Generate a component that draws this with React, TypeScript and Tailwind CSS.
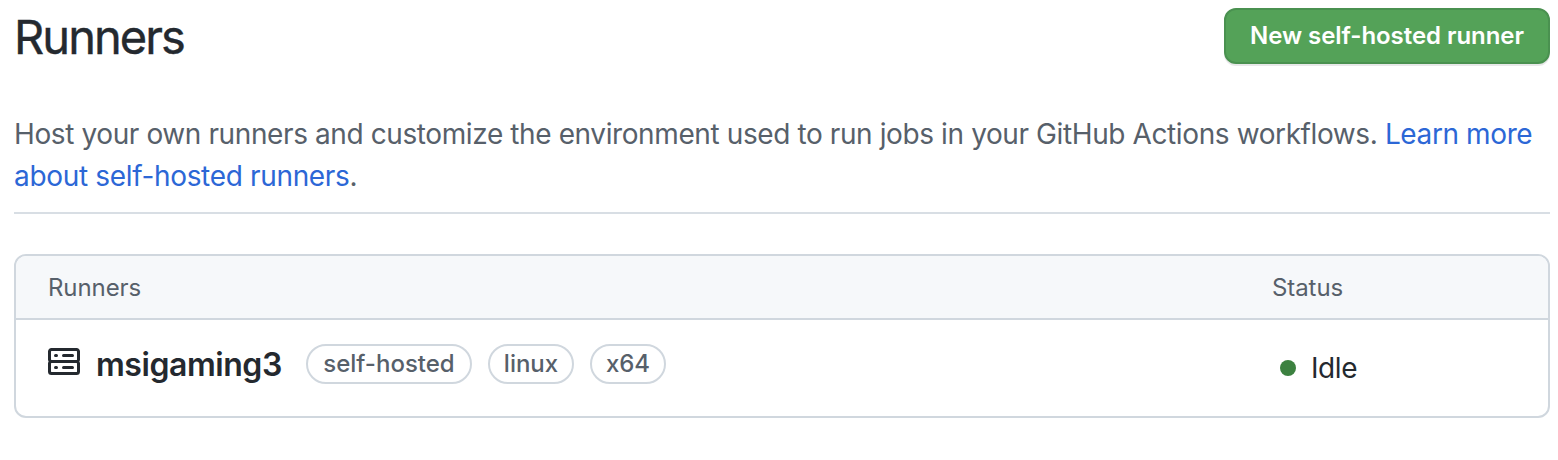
import React from "react";

const labels = [
  { name: "self-hosted", width: "w-[166px]" },
  { name: "linux", width: "w-[86px]" },
  { name: "x64", width: "w-[76px]" },
];

function ServerIcon() {
  return (
    <svg width="32" height="32" viewBox="0 0 16 16" fill="#24292f" className="shrink-0">
      <path d="M1.75 1h12.5c.966 0 1.75.784 1.75 1.75v4c0 .372-.116.717-.314 1 .198.283.314.628.314 1v4a1.75 1.75 0 0 1-1.75 1.75H1.75A1.75 1.75 0 0 1 0 12.75v-4c0-.358.109-.707.314-1a1.739 1.739 0 0 1-.314-1v-4C0 1.784.784 1 1.75 1ZM1.5 2.75v4c0 .138.112.25.25.25h12.5a.25.25 0 0 0 .25-.25v-4a.25.25 0 0 0-.25-.25H1.75a.25.25 0 0 0-.25.25Zm.25 5.75a.25.25 0 0 0-.25.25v4c0 .138.112.25.25.25h12.5a.25.25 0 0 0 .25-.25v-4a.25.25 0 0 0-.25-.25ZM7 4.75A.75.75 0 0 1 7.75 4h4.5a.75.75 0 0 1 0 1.5h-4.5A.75.75 0 0 1 7 4.75ZM7.75 10h4.5a.75.75 0 0 1 0 1.5h-4.5a.75.75 0 0 1 0-1.5ZM3 4.75A.75.75 0 0 1 3.75 4h.5a.75.75 0 0 1 0 1.5h-.5A.75.75 0 0 1 3 4.75ZM3.75 10h.5a.75.75 0 0 1 0 1.5h-.5a.75.75 0 0 1 0-1.5Z" />
    </svg>
  );
}

export default function App() {
  return (
    <main className="h-[460px] w-[1558px] overflow-hidden bg-white pl-3.5 pr-2 pt-2 font-['Inter','Liberation_Sans',sans-serif] text-[#24292f]">
      <header className="flex h-14 items-start justify-between">
        <h1 className="text-[47px] font-normal leading-[58px] tracking-[-1.95px] [-webkit-text-stroke:0.4px_#24292f]">Runners</h1>
        <button className="h-14 w-[326px] whitespace-nowrap rounded-xl border-2 border-[#4a9150] bg-[#54a258] text-2xl font-semibold tracking-[-0.05px] text-white shadow-[0_2px_0_rgba(27,31,36,0.1)]">
          New self-hosted runner
        </button>
      </header>
      <p className="mt-[49px] whitespace-nowrap text-[28px] leading-[42px] tracking-[-0.395px] text-[#57606a]">
        Host your own runners and customize the environment used to run jobs in your GitHub Actions workflows.{" "}
        <a className="text-[#2c67d6]">
          Learn more
          <br />
          <span className="tracking-[-0.33px]">about self-hosted runners</span>
        </a>
        .
      </p>
      <hr className="mt-[15px] border-0 border-t-2 border-[#d8dee4]" />
      <section className="mt-10 h-[164px] overflow-hidden rounded-xl border-2 border-[#d0d7de]">
        <div className="flex h-16 items-center border-b-2 border-[#d0d7de] bg-[#f6f8fa] pl-8 pt-0.5 text-2xl tracking-[-0.08px] text-[#57606a]">
          <span className="w-[1224px]">Runners</span>
          <span>Status</span>
        </div>
        <div className="flex h-24 pl-8">
          <div className="flex w-[1232px] items-start pt-6">
            <div className="pt-0.5"><ServerIcon /></div>
            <strong className="ml-4 w-[210px] text-[32px] font-semibold leading-[42px] tracking-[-0.45px]">msigaming3</strong>
            <div className="flex gap-4">
              {labels.map((label) => (
                <span key={label.name} className={`${label.width} flex h-10 items-center justify-center rounded-full border-2 border-[#d0d7de] text-2xl font-medium text-[#57606a]`}>
                  {label.name}
                </span>
              ))}
            </div>
          </div>
          <div className="flex h-24 items-center gap-[15px] text-[28px] tracking-[-0.4px]">
            <span className="size-4 rounded-full bg-[#3c8140]" />
            <span>Idle</span>
          </div>
        </div>
      </section>
    </main>
  );
}
